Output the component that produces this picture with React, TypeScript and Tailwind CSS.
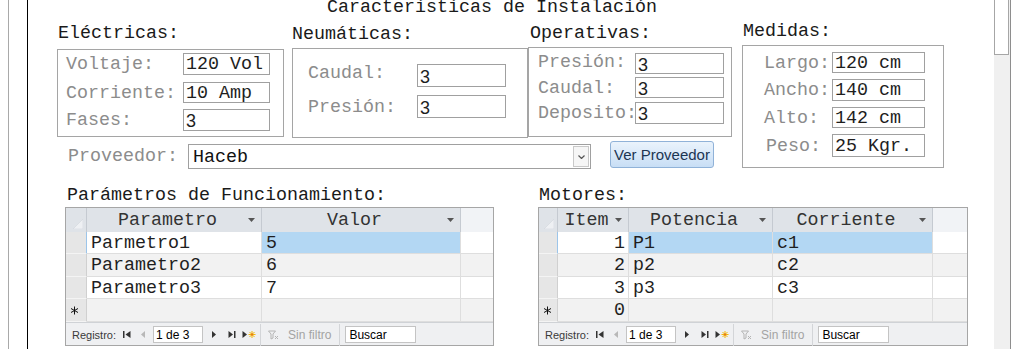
import React from "react";

const mono = "font-['Liberation_Mono','Courier_New',monospace] text-[18.33px]";
const sans = "font-['Liberation_Sans',Arial,sans-serif]";

function Arrow() {
  return (
    <svg width="7" height="4" viewBox="0 0 7 4" className="shrink-0">
      <path d="M0 0 H7 L3.5 4Z" fill="#555" />
    </svg>
  );
}

function Star() {
  return (
    <svg width="9" height="9" viewBox="0 0 9 9">
      <path d="M4.5 0.5 V8.5 M1 2.5 L8 6.5 M8 2.5 L1 6.5" stroke="#111" strokeWidth="1" />
    </svg>
  );
}

function NavBar() {
  return (
    <div className={`flex h-[23px] items-center border-t border-[#cfd2d6] bg-[#eff0f2] pt-[1px] ${sans} text-[11px] whitespace-nowrap`}>
      <span className="ml-[6px] text-[#3a3a3a]">Registro:</span>
      <svg width="8" height="9" viewBox="0 0 8 9" className="ml-[7px]">
        <rect x="0" y="1" width="1.5" height="7" fill="#333" />
        <path d="M7.5 1 L2.5 4.5 L7.5 8Z" fill="#333" />
      </svg>
      <svg width="6" height="9" viewBox="0 0 6 9" className="ml-[9px]">
        <path d="M5 1 L1 4.5 L5 8Z" fill="#b8b8b8" />
      </svg>
      <div className="ml-[7px] flex h-[17px] w-[50px] items-center border border-[#c4c4c4] bg-white pl-[2px] text-[12px] text-black">
        1 de 3
      </div>
      <svg width="6" height="9" viewBox="0 0 6 9" className="ml-[8px]">
        <path d="M1 1 L5 4.5 L1 8Z" fill="#333" />
      </svg>
      <svg width="8" height="9" viewBox="0 0 8 9" className="ml-[11px]">
        <path d="M0.5 1 L5 4.5 L0.5 8Z" fill="#333" />
        <rect x="6" y="1" width="1.5" height="7" fill="#333" />
      </svg>
      <svg width="14" height="9" viewBox="0 0 14 9" className="ml-[6px]">
        <path d="M0.5 1 L5 4.5 L0.5 8Z" fill="#333" />
        <path d="M10 1 V8 M6.5 4.5 H13.5 M7.5 2 L12.5 7 M12.5 2 L7.5 7" stroke="#f2b705" strokeWidth="1" />
        <rect x="9" y="3.5" width="2" height="2" fill="#e8791a" />
      </svg>
      <div className="ml-[4px] h-[22px] w-[1px] bg-[#d3d5d8]" />
      <svg width="11" height="10" viewBox="0 0 11 10" className="ml-[7px]">
        <path d="M0.5 1 H7.5 L5 4 V8 L3 9 V4Z" fill="none" stroke="#b4b4b4" />
        <path d="M7 6 L10 9 M10 6 L7 9" stroke="#b4b4b4" />
      </svg>
      <span className="ml-[9px] text-[12px] text-[#a3a3a3]">Sin filtro</span>
      <div className="ml-[8px] h-[22px] w-[1px] bg-[#d3d5d8]" />
      <div className="ml-[5px] flex h-[17px] w-[71px] items-center border border-[#c4c4c4] bg-white pl-[3px] text-[12px] text-black">
        Buscar
      </div>
    </div>
  );
}

type Col = { w: string; label: string };

function Header({ sel, cols }: { sel: string; cols: Col[] }) {
  return (
    <div className={`flex h-[24px] bg-[#dfe3e8] ${mono} leading-[20px] text-[#333]`}>
      <div className={`${sel} relative shrink-0 border-r border-[#c5cad1]`}>
        <svg width="10" height="10" viewBox="0 0 10 10" className="absolute bottom-[3px] right-[3px]">
          <path d="M10 0 V10 H0Z" fill="#eef0f3" stroke="#cfd3d9" strokeWidth="0.5" />
        </svg>
      </div>
      {cols.map((c) => (
        <div key={c.label} className={`${c.w} flex shrink-0 items-center border-r border-[#c5cad1] pr-[6px]`}>
          <span className="flex-1 translate-y-[1px] text-center whitespace-nowrap">{c.label}</span>
          <Arrow />
        </div>
      ))}
      <div className="flex-1 bg-[#f1f3f6]" />
    </div>
  );
}

type Cell = { text: string; w: string; right?: boolean; blue?: boolean };

function Row({ sel, cells, bg, h, star, current }: { sel: string; cells: Cell[]; bg: string; h: string; star?: boolean; current?: boolean }) {
  return (
    <div className={`flex ${h} ${bg} ${mono} leading-[20px] text-[#1f1f1f]`}>
      <div
        className={`${sel} flex shrink-0 items-center justify-start pl-[4px] border-b border-b-[#f4f4f4] border-r ${current ? "border-r-[#9cc5ea]" : "border-r-[#d0d0d0]"} bg-[#e6e6e6]`}
      >
        {star ? <Star /> : null}
      </div>
      {cells.map((c, i) => (
        <div
          key={i}
          className={`${c.w} flex shrink-0 items-center border-b border-r border-[#dedede] ${c.right ? "justify-end pr-[3px]" : "pl-[4px]"} ${c.blue ? "bg-[#b3d7f3]" : ""} whitespace-nowrap`}
        >
          <span className="translate-y-[1px]">{c.text}</span>
        </div>
      ))}
      <div className="flex-1 border-b border-[#dedede]" />
    </div>
  );
}

function Input({ v, w, h, num }: { v: string; w: string; h: string; num?: boolean }) {
  return (
    <div
      className={`${w} ${h} flex shrink-0 items-center border border-[#a0a0a0] pl-[2px] whitespace-nowrap text-[#1e1e1e] ${
        num ? `${sans} text-[18px]` : ""
      }`}
    >
      <span className="translate-y-[1px]">{v}</span>
    </div>
  );
}

export default function App() {
  const labelCls = "shrink-0 whitespace-nowrap text-[#8c8c8c] translate-y-[1px]";
  return (
    <div className="flex h-[349px] w-[1022px] overflow-hidden bg-white">
      <div className="w-[8px] shrink-0" />
      <div className="w-[19px] shrink-0 border-l border-[#a9a9a9]" />
      <main className={`flex w-[967px] shrink-0 flex-col border-l border-black ${mono} leading-[20px] text-[#1a1a1a]`}>
        <div className="mt-[-3px] ml-[299px] h-[20px] pt-[1px] whitespace-nowrap">Características de Instalación</div>

        <div className="ml-[29px] flex items-start">
          <div className="flex flex-col">
            <div className="flex items-start">
              {/* Eléctricas */}
              <div className="flex w-[227px] flex-col">
                <div className="mt-[5px] h-[20px] pt-[2px] pl-[1px]">Eléctricas:</div>
                <div className="mt-[7px] flex h-[88px] flex-col border border-[#a5a5a5] pt-[3px] pl-[8px]">
                  <div className="flex h-[22px] items-center">
                    <span className={`${labelCls} w-[117px]`}>Voltaje:</span>
                    <Input v="120 Vol" w="w-[87px]" h="h-[22px]" />
                  </div>
                  <div className="mt-[7px] flex h-[21px] items-center">
                    <span className={`${labelCls} w-[117px]`}>Corriente:</span>
                    <Input v="10 Amp" w="w-[87px]" h="h-[21px]" />
                  </div>
                  <div className="mt-[6px] flex h-[22px] items-center">
                    <span className={`${labelCls} w-[117px]`}>Fases:</span>
                    <Input v="3" w="w-[87px]" h="h-[22px]" num />
                  </div>
                </div>
              </div>
              {/* Neumáticas */}
              <div className="ml-[8px] flex w-[236px] flex-col">
                <div className="mt-[6px] h-[20px] pt-[2px]">Neumáticas:</div>
                <div className="mt-[5px] flex h-[90px] flex-col gap-[8px] border border-[#a5a5a5] pt-[15px] pl-[15px]">
                  <div className="flex h-[23px] items-center">
                    <span className={`${labelCls} w-[109px] mt-[-6px]`}>Caudal:</span>
                    <Input v="3" w="w-[89px]" h="h-[23px]" num />
                  </div>
                  <div className="flex h-[23px] items-center">
                    <span className={`${labelCls} w-[109px]`}>Presión:</span>
                    <Input v="3" w="w-[89px]" h="h-[23px]" num />
                  </div>
                </div>
              </div>
              {/* Operativas */}
              <div className="flex w-[204px] flex-col">
                <div className="mt-[5px] h-[20px] pt-[2px] pl-[2px]">Operativas:</div>
                <div className="mt-[5px] flex h-[90px] flex-col border border-[#a5a5a5] pt-[5px] pl-[9px]">
                  <div className="flex h-[21px] items-center">
                    <span className={`${labelCls} w-[97px] mt-[-3px]`}>Presión:</span>
                    <Input v="3" w="w-[89px]" h="h-[21px]" num />
                  </div>
                  <div className="mt-[3px] flex h-[21px] items-center">
                    <span className={`${labelCls} w-[97px]`}>Caudal:</span>
                    <Input v="3" w="w-[89px]" h="h-[21px]" num />
                  </div>
                  <div className="mt-[4px] flex h-[22px] items-center">
                    <span className={`${labelCls} w-[97px]`}>Deposito:</span>
                    <Input v="3" w="w-[89px]" h="h-[22px]" num />
                  </div>
                </div>
              </div>
            </div>
            {/* Proveedor */}
            <div className="mt-[3px] flex h-[27px] items-start pl-[11px]">
              <span className={`${labelCls} mt-[5px] w-[120px]`}>Proveedor:</span>
              <div className="mt-[3px] flex h-[25px] w-[403px] items-center border border-[#a0a0a0] bg-white">
                <span className="flex-1 translate-y-[1px] pl-[4px] text-[#111]">Haceb</span>
                <div className="mr-[1px] flex h-[21px] w-[16px] items-center justify-center border border-[#c9c9c9] bg-[#f6f6f6]">
                  <svg width="7" height="4" viewBox="0 0 7 4">
                    <path d="M0.5 0.5 L3.5 3.5 L6.5 0.5" fill="none" stroke="#555" strokeWidth="1.2" />
                  </svg>
                </div>
              </div>
              <button
                className={`ml-[19px] flex h-[27px] w-[104px] items-center justify-center rounded-[3px] border border-[#90b2d8] bg-linear-to-b from-[#eaf3fc] to-[#c8def5] ${sans} text-[15px] leading-none text-[#1c3552]`}
              >
                Ver Proveedor
              </button>
            </div>
          </div>
          {/* Medidas */}
          <div className="ml-[10px] flex w-[202px] flex-col">
            <div className="mt-[3px] h-[20px] pt-[2px] pl-[1px]">Medidas:</div>
            <div className="mt-[5px] flex h-[123px] flex-col border border-[#a5a5a5] pt-[6px] pl-[21px]">
              <div className="flex h-[21px] items-center">
                <span className={`${labelCls} w-[68px]`}>Largo:</span>
                <Input v="120 cm" w="w-[93px]" h="h-[21px]" />
              </div>
              <div className="mt-[6px] flex h-[22px] items-center">
                <span className={`${labelCls} w-[68px]`}>Ancho:</span>
                <Input v="140 cm" w="w-[93px]" h="h-[22px]" />
              </div>
              <div className="mt-[6px] flex h-[21px] items-center">
                <span className={`${labelCls} w-[68px]`}>Alto:</span>
                <Input v="142 cm" w="w-[93px]" h="h-[21px]" />
              </div>
              <div className="mt-[6px] flex h-[23px] items-center">
                <span className={`${labelCls} w-[68px] pl-[2px]`}>Peso:</span>
                <Input v="25 Kgr." w="w-[93px]" h="h-[23px]" />
              </div>
            </div>
          </div>
        </div>

        {/* Tables */}
        <div className="mt-[15px] ml-[37px] flex items-start">
          <div className="flex w-[429px] flex-col">
            <div className="h-[20px] pt-[3px] pl-[2px] whitespace-nowrap">Parámetros de Funcionamiento:</div>
            <div className="mt-[4px] flex flex-col border border-[#a6a6a6]">
              <Header
                sel="w-[21px]"
                cols={[
                  { w: "w-[175px]", label: "Parametro" },
                  { w: "w-[199px]", label: "Valor" },
                ]}
              />
              <Row
                sel="w-[21px]"
                h="h-[22px]"
                bg="bg-white"
                current
                cells={[
                  { text: "Parmetro1", w: "w-[175px]" },
                  { text: "5", w: "w-[199px]", blue: true },
                ]}
              />
              <Row
                sel="w-[21px]"
                h="h-[23px]"
                bg="bg-[#f2f2f2]"
                cells={[
                  { text: "Parametro2", w: "w-[175px]" },
                  { text: "6", w: "w-[199px]" },
                ]}
              />
              <Row
                sel="w-[21px]"
                h="h-[22px]"
                bg="bg-white"
                cells={[
                  { text: "Parametro3", w: "w-[175px]" },
                  { text: "7", w: "w-[199px]" },
                ]}
              />
              <Row
                sel="w-[21px]"
                h="h-[23px]"
                bg="bg-[#f2f2f2]"
                star
                cells={[
                  { text: "", w: "w-[175px]" },
                  { text: "", w: "w-[199px]" },
                ]}
              />
              <NavBar />
            </div>
          </div>

          <div className="ml-[44px] flex w-[430px] flex-col">
            <div className="h-[20px] pt-[3px] pl-[1px]">Motores:</div>
            <div className="mt-[4px] flex flex-col border border-[#a6a6a6]">
              <Header
                sel="w-[19px]"
                cols={[
                  { w: "w-[71px]", label: "Item" },
                  { w: "w-[144px]", label: "Potencia" },
                  { w: "w-[160px]", label: "Corriente" },
                ]}
              />
              <Row
                sel="w-[19px]"
                h="h-[22px]"
                bg="bg-white"
                current
                cells={[
                  { text: "1", w: "w-[71px]", right: true },
                  { text: "P1", w: "w-[144px]", blue: true },
                  { text: "c1", w: "w-[160px]", blue: true },
                ]}
              />
              <Row
                sel="w-[19px]"
                h="h-[23px]"
                bg="bg-[#f2f2f2]"
                cells={[
                  { text: "2", w: "w-[71px]", right: true },
                  { text: "p2", w: "w-[144px]" },
                  { text: "c2", w: "w-[160px]" },
                ]}
              />
              <Row
                sel="w-[19px]"
                h="h-[22px]"
                bg="bg-white"
                cells={[
                  { text: "3", w: "w-[71px]", right: true },
                  { text: "p3", w: "w-[144px]" },
                  { text: "c3", w: "w-[160px]" },
                ]}
              />
              <Row
                sel="w-[19px]"
                h="h-[23px]"
                bg="bg-[#f2f2f2]"
                star
                cells={[
                  { text: "0", w: "w-[71px]", right: true },
                  { text: "", w: "w-[144px]" },
                  { text: "", w: "w-[160px]" },
                ]}
              />
              <NavBar />
            </div>
          </div>
        </div>
      </main>
      {/* Scrollbar */}
      <div className="flex w-[17px] shrink-0">
        <div className="flex w-[16px] flex-col bg-[#f0f0f0]">
          <div className="mt-[-1px] h-[56px] w-[15px] border border-[#a6a6a6] bg-white" />
        </div>
        <div className="w-[1px] bg-[#8e8e8e]" />
      </div>
      <div className="flex-1" />
    </div>
  );
}
